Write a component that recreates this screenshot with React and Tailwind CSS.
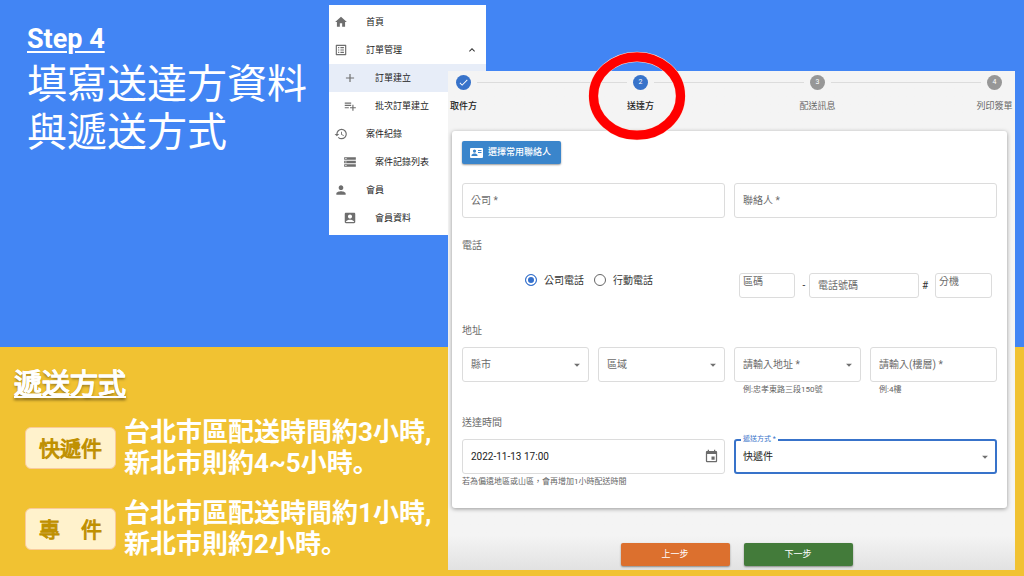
import React, { useState } from "react";
import {
  MdHome,
  MdListAlt,
  MdAdd,
  MdPlaylistAdd,
  MdHistory,
  MdStorage,
  MdPerson,
  MdAccountBox,
  MdExpandLess,
  MdEvent,
  MdArrowDropDown,
  MdCheck,
} from "react-icons/md";

const MENU = [
  { icon: MdHome, label: "首頁" },
  { icon: MdListAlt, label: "訂單管理", open: true },
  { icon: MdAdd, label: "訂單建立", child: true, active: true },
  { icon: MdPlaylistAdd, label: "批次訂單建立", child: true },
  { icon: MdHistory, label: "案件紀錄" },
  { icon: MdStorage, label: "案件記錄列表", child: true },
  { icon: MdPerson, label: "會員" },
  { icon: MdAccountBox, label: "會員資料", child: true },
];

const STEPS = [
  { label: "取件方", state: "done" },
  { label: "送達方", state: "current" },
  { label: "配送訊息", state: "todo" },
  { label: "列印簽單", state: "todo" },
];

const SERVICES = [
  { name: "快遞件", lines: ["台北市區配送時間約3小時,", "新北市則約4~5小時。"] },
  { name: "專　件", lines: ["台北市區配送時間約1小時,", "新北市則約2小時。"] },
];

const FIELD =
  "block w-full rounded-[3px] border border-[#dcdcdc] bg-white text-[10px] outline-none placeholder:text-[#6b6b6b] placeholder:opacity-100";

function SideMenu() {
  return (
    <nav className="mt-[5px] h-[230px] w-[157px] shrink-0 bg-white py-[3px]">
      <ul>
        {MENU.map(({ icon: Icon, label, child, active, open }) => (
          <li key={label}>
            <a
              href="#"
              className={`flex h-7 items-center gap-[18px] pr-2 text-[9px] text-[#222] ${
                child ? "pl-[14px]" : "pl-[5px]"
              } ${active ? "bg-[#e7edf8]" : ""}`}
            >
              <Icon className="size-[14px] shrink-0 text-[#6e6e6e]" />
              <span className="flex-1 whitespace-nowrap pt-0.5">{label}</span>
              {open && <MdExpandLess className="size-3 text-[#333]" />}
            </a>
          </li>
        ))}
      </ul>
    </nav>
  );
}

function ContactCardIcon() {
  return (
    <svg className="h-[10px] w-[13px]" viewBox="0 0 26 20" aria-hidden="true">
      <path
        fill="currentColor"
        fillRule="evenodd"
        d="M2 0h22a2 2 0 0 1 2 2v16a2 2 0 0 1-2 2H2a2 2 0 0 1-2-2V2a2 2 0 0 1 2-2zM9 3a3.2 3.2 0 1 0 0 6.4A3.2 3.2 0 0 0 9 3zM3 16h12v-1.4c0-2.4-4-3.6-6-3.6s-6 1.200-6 3.600zM16 4v2.200h7V4zM16 8v2.200h7V8z"
      />
    </svg>
  );
}

function Highlight() {
  return (
    <svg
      className="pointer-events-none absolute -left-[37px] -top-[24px] h-[91px] w-[98px] max-w-none"
      viewBox="0 0 98 91"
      fill="none"
      aria-hidden="true"
    >
      <ellipse cx="49" cy="45" rx="43.5" ry="39.2" stroke="#fbe3d6" strokeWidth="10.2" />
      <ellipse cx="49" cy="45" rx="43.5" ry="39.2" stroke="#ff0000" strokeWidth="9.2" />
    </svg>
  );
}

function Stepper() {
  return (
    <ol className="flex h-[60px] items-start pr-[5px] pt-1">
      {STEPS.map((step, i) => (
        <React.Fragment key={step.label}>
          {i > 0 && <li aria-hidden="true" className="-mx-0.5 mt-[7px] h-px flex-1 bg-[#dcdcdc]" />}
          <li className="relative flex w-[31px] shrink-0 flex-col items-center">
            <span
              className={`flex size-[15px] items-center justify-center rounded-full text-[7px] text-white ${
                step.state === "todo" ? "bg-[#979797]" : "bg-[#3873ca]"
              }`}
            >
              {step.state === "done" ? <MdCheck className="size-[11px]" /> : i + 1}
            </span>
            <span
              className={`mt-[9px] whitespace-nowrap text-[9px] leading-[14px] ${
                step.state === "todo" ? "text-[#666]" : "font-medium text-[#222]"
              }`}
            >
              {step.label}
            </span>
            {step.state === "current" && <Highlight />}
          </li>
        </React.Fragment>
      ))}
    </ol>
  );
}

function SelectField({ label, options, helper }) {
  return (
    <div>
      <div className="relative">
        <select aria-label={label} className={`${FIELD} h-[35px] appearance-none px-2 text-[#6b6b6b]`}>
          {options.map((o) => (
            <option key={o}>{o}</option>
          ))}
        </select>
        <MdArrowDropDown className="pointer-events-none absolute right-[5px] top-[11px] size-[14px] text-[#707070]" />
      </div>
      {helper && <Helper className="pl-[9px]">{helper}</Helper>}
    </div>
  );
}

function Helper({ children, className = "" }) {
  return (
    <p className={`mt-0.5 whitespace-nowrap text-[8px] leading-3 text-[#666] ${className}`}>{children}</p>
  );
}

function SectionTitle({ children, className }) {
  return <h3 className={`text-[10px] leading-[14px] text-[#6b6b6b] ${className}`}>{children}</h3>;
}

function PhoneRadio({ value, current, onChange, children }) {
  return (
    <label className="flex items-center gap-[7px] text-[10px] text-[#333]">
      <input
        type="radio"
        name="phone-type"
        checked={current === value}
        onChange={() => onChange(value)}
        className="size-3 appearance-none rounded-full border border-[#666] bg-white checked:border-[#3470cc] checked:bg-[#3470cc] checked:shadow-[inset_0_0_0_2px_white]"
      />
      {children}
    </label>
  );
}

function OrderForm() {
  const [phone, setPhone] = useState("company");
  return (
    <form
      className="ml-1 mr-2 rounded-[3px] bg-white px-[10px] pb-5 pt-[10px] shadow-[0_1px_4px_rgba(0,0,0,0.38)]"
      onSubmit={(e) => e.preventDefault()}
    >
      <button
        type="button"
        className="flex h-[23px] items-center gap-[5px] rounded-[2px] bg-[#3a85cb] pl-2 pr-[10px] text-[9px] font-medium text-white shadow-[0_1px_2px_rgba(0,0,0,0.4)]"
      >
        <ContactCardIcon />
        選擇常用聯絡人
      </button>

      <div className="mt-[19px] grid grid-cols-2 gap-[9px]">
        <input aria-label="公司" placeholder="公司 *" className={`${FIELD} h-[35px] px-2`} />
        <input aria-label="聯絡人" placeholder="聯絡人 *" className={`${FIELD} h-[35px] px-2`} />
      </div>

      <SectionTitle className="mt-[21px]">電話</SectionTitle>
      <div className="mt-5 grid grid-cols-2 gap-[9px]">
        <div className="flex h-[14px] items-center gap-[10px] pl-[63px]">
          <PhoneRadio value="company" current={phone} onChange={setPhone}>
            公司電話
          </PhoneRadio>
          <PhoneRadio value="mobile" current={phone} onChange={setPhone}>
            行動電話
          </PhoneRadio>
        </div>
        <div className="flex items-center px-[5px] text-[10px] text-[#333]">
          <div className="w-14">
            <input aria-label="區碼" placeholder="區碼" className={`${FIELD} h-[25px] px-[3px] pb-2`} />
          </div>
          <span className="w-[14px] pl-1 text-center">-</span>
          <div className="flex-1">
            <input aria-label="電話號碼" placeholder="電話號碼" className={`${FIELD} h-[25px] px-2`} />
          </div>
          <span className="w-4 pr-1 text-center">#</span>
          <div className="w-[57px]">
            <input aria-label="分機" placeholder="分機" className={`${FIELD} h-[25px] px-[3px] pb-2`} />
          </div>
        </div>
      </div>

      <SectionTitle className="mt-[26px]">地址</SectionTitle>
      <div className="mt-[9px] grid grid-cols-4 gap-[9px]">
        <SelectField label="縣市" options={["縣市"]} />
        <SelectField label="區域" options={["區域"]} />
        <SelectField label="請輸入地址" options={["請輸入地址 *"]} helper="例:忠孝東路三段150號" />
        <div>
          <input aria-label="請輸入(樓層)" placeholder="請輸入(樓層) *" className={`${FIELD} h-[35px] px-2`} />
          <Helper className="pl-[9px]">例:4樓</Helper>
        </div>
      </div>

      <SectionTitle className="mt-5">送達時間</SectionTitle>
      <div className="mt-[9px] grid grid-cols-2 gap-[9px]">
        <div>
          <div className="relative">
            <input
              aria-label="送達時間"
              defaultValue="2022-11-13 17:00"
              className={`${FIELD} h-[35px] px-2 text-[#222]`}
            />
            <MdEvent className="pointer-events-none absolute right-[6px] top-[10px] size-[15px] text-[#6b6b6b]" />
          </div>
          <Helper>若為偏遠地區或山區，會再增加1小時配送時間</Helper>
        </div>
        <div className="relative h-[35px]">
          <label
            htmlFor="delivery"
            className="absolute -top-[5px] left-[7px] bg-white px-0.5 text-[7px] leading-[10px] text-[#3873ca]"
          >
            遞送方式 *
          </label>
          <select
            id="delivery"
            defaultValue="快遞件"
            className="block h-[35px] w-full appearance-none rounded-[3px] border-2 border-[#3873ca] px-[7px] text-[10px] text-[#222] outline-none"
          >
            <option>快遞件</option>
            <option>專件</option>
          </select>
          <MdArrowDropDown className="pointer-events-none absolute right-[5px] top-[11px] size-[14px] text-[#707070]" />
        </div>
      </div>
    </form>
  );
}

export default function App() {
  return (
    <main className="grid min-h-screen grid-cols-[448px_1fr_9px] grid-rows-[347px_1fr] font-['Roboto','Noto_Sans_CJK_TC',sans-serif]">
      <section className="col-span-3 col-start-1 row-start-1 flex items-start bg-[#4285f4] text-white">
        <header className="w-[329px] shrink-0 pl-[27px] pt-[21px] font-['Roboto','Noto_Sans_CJK_JP',sans-serif]">
          <p className="text-[27px] font-bold leading-9">
            <span className="underline decoration-2 underline-offset-3">Step 4</span>
          </p>
          <h1 className="mt-1 whitespace-nowrap text-[40px] leading-[48px]">
            填寫送達方資料
            <br />
            與遞送方式
          </h1>
        </header>
        <SideMenu />
      </section>

      <section className="col-span-3 col-start-1 row-start-2 bg-[#f1c232] pt-5 font-['Roboto','Noto_Sans_CJK_JP',sans-serif]">
        <h2 className="pl-[14px] text-[28px] leading-9 text-white [-webkit-text-stroke:1px_white] [text-shadow:0_2px_3px_rgba(0,0,0,0.5)]">
          <span className="underline decoration-2 underline-offset-2">遞送方式</span>
        </h2>
        <div className="mt-[14px] flex flex-col gap-[19px] pl-[25px]">
          {SERVICES.map((s) => (
            <div key={s.name} className="flex items-center gap-2">
              <h3 className="flex h-[42px] w-[91px] shrink-0 items-center justify-center rounded-md border border-[#f9cb9c] bg-[#fff2cc] pt-[3px] text-[21px] text-[#bf9000] [-webkit-text-stroke:1px_#bf9000]">
                {s.name}
              </h3>
              <p className="whitespace-nowrap text-[26px] font-bold leading-[31px] text-white">
                {s.lines[0]}
                <br />
                {s.lines[1]}
              </p>
            </div>
          ))}
        </div>
      </section>

      <section className="relative col-start-2 row-span-2 row-start-1 mb-[6px] mt-[71px] bg-linear-to-b from-[#f4f4f4] from-93% to-[#e2e2e2]">
        <Stepper />
        <OrderForm />
        <div className="mt-[35px] flex justify-center gap-[14px] pb-1 pl-[10px] text-[9px] text-white">
          <button
            type="button"
            className="h-[23px] w-[109px] rounded-[2px] bg-[#dc702e] shadow-[0_1px_2px_rgba(0,0,0,0.4)]"
          >
            上一步
          </button>
          <button
            type="button"
            className="h-[23px] w-[109px] rounded-[2px] bg-[#437b3a] shadow-[0_1px_2px_rgba(0,0,0,0.4)]"
          >
            下一步
          </button>
        </div>
      </section>
    </main>
  );
}
